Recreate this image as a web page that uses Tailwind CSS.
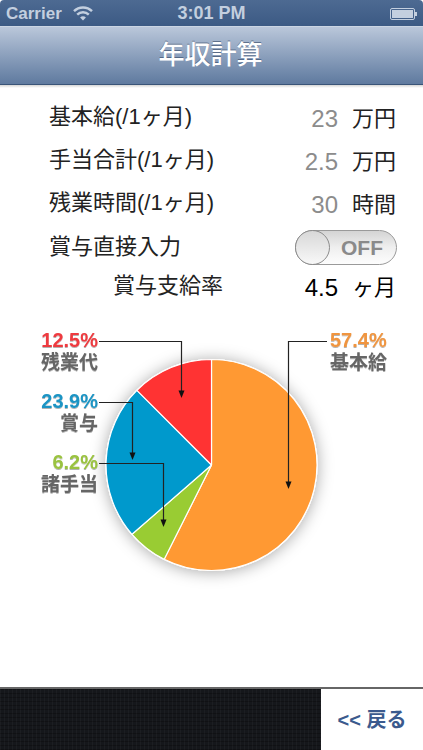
<!DOCTYPE html>
<html lang="ja">
  <head>
    <meta charset="UTF-8" />
    <meta name="viewport" content="width=device-width, initial-scale=1.0" />
    <title>年収計算</title>
    <script src="https://cdn.jsdelivr.net/npm/@tailwindcss/browser@4"></script>
  </head>

  <body class="bg-white w-[423px] h-[750px] overflow-hidden flex flex-col font-['Liberation_Sans','Noto_Sans_CJK_JP',sans-serif]">
    <!-- Status bar -->
    <div class="h-[26px] shrink-0 flex items-center relative px-[6px] pt-[1px] rounded-t-[4px] bg-gradient-to-b from-[#4d6a92] to-[#3c5a84] text-[#c3cfdf] font-bold text-[17px]">
      <span>Carrier</span>
      <svg class="ml-[11px]" width="20" height="15" viewBox="0 0 20 15" fill="none" stroke="#c3cfdf" stroke-width="2.4">
        <path d="M1 5.2a12.8 12.8 0 0 1 18 0" />
        <path d="M4.200 8.600a8.200 8.200 0 0 1 11.600 0" />
        <path d="M10 14.600l-2.900-3a4 4 0 0 1 5.800 0z" fill="#c3cfdf" stroke="none" />
      </svg>
      <span class="absolute left-0 right-0 top-[3px] text-center text-[18px] leading-[20px]">3:01 PM</span>
      <div class="ml-auto flex items-center">
        <div class="w-[25px] h-[12px] border border-[#c3cfdf] rounded-[2px] p-[1px]">
          <div class="w-full h-full bg-[#c3cfdf]"></div>
        </div>
        <div class="w-[2px] h-[4px] bg-[#c3cfdf]"></div>
      </div>
    </div>

    <!-- Nav bar -->
    <div class="h-[59px] shrink-0 flex items-center justify-center pr-[2px] border-t border-t-[#cbd5e3] border-b border-b-[#3a5478] bg-gradient-to-b from-[#bac7da] to-[#5f7a9f] text-white text-[26px] font-medium [text-shadow:0_-1px_0_rgba(50,70,100,0.6)]">
      年収計算
    </div>
    <div class="h-[3px] shrink-0 bg-gradient-to-b from-[#d5d5d5] to-white"></div>

    <!-- Form -->
    <div class="flex flex-col pl-[49px] pr-[27px] pt-[9px] text-[22px] text-[#222]">
      <div class="h-[43px] flex items-center">
        <span class="flex-1 pb-[4px]">基本給(/1ヶ月)</span>
        <span class="text-[#8c8c8c] text-[24px]">23</span>
        <span class="w-[58px] text-right">万円</span>
      </div>
      <div class="h-[43px] flex items-center">
        <span class="flex-1 pb-[4px]">手当合計(/1ヶ月)</span>
        <span class="text-[#8c8c8c] text-[24px]">2.5</span>
        <span class="w-[58px] text-right">万円</span>
      </div>
      <div class="h-[43px] flex items-center">
        <span class="flex-1 pb-[4px]">残業時間(/1ヶ月)</span>
        <span class="text-[#8c8c8c] text-[24px]">30</span>
        <span class="w-[58px] text-right">時間</span>
      </div>
      <div class="h-[43px] flex items-center">
        <span class="flex-1 pb-[2px]">賞与直接入力</span>
        <div class="w-[102px] h-[35px] mr-[-1px] rounded-full border border-[#9a9a9a] bg-gradient-to-b from-[#d4d4d4] via-[#efefef] to-[#fdfdfd] flex items-center relative">
          <span class="absolute right-[13px] text-[#8a8a8a] font-bold text-[21px] leading-none">OFF</span>
          <div class="w-[35px] h-[35px] ml-[-1px] rounded-full border border-[#8c8c8c] bg-gradient-to-b from-[#d8d8d8] to-[#f8f8f8]"></div>
        </div>
      </div>
      <div class="h-[37px] flex items-center pl-[64px]">
        <span class="flex-1 pb-[4px]">賞与支給率</span>
        <span class="text-black text-[24px]">4.5</span>
        <span class="w-[58px] text-right text-black">ヶ月</span>
      </div>
    </div>

    <!-- Chart -->
    <svg class="shrink-0 mt-[14px]" width="423" height="290" viewBox="0 0 423 290">
      <defs>
        <filter id="pieShadow" x="-25%" y="-25%" width="150%" height="150%">
          <feDropShadow dx="0" dy="1" stdDeviation="8" flood-color="#000" flood-opacity="0.35" />
        </filter>
        <filter id="labelShadow" x="-10%" y="-20%" width="120%" height="140%">
          <feDropShadow dx="0" dy="1" stdDeviation="0.7" flood-color="#000" flood-opacity="0.3" />
        </filter>
      </defs>

      <g transform="translate(0.5 0)">
        <circle cx="211" cy="145" r="106" fill="#fff" filter="url(#pieShadow)" />
        <g stroke="#fff" stroke-width="1.2" stroke-linejoin="round">
          <path d="M211 145V39.5A105.500 105.500 0 1 1 163.700 239.300Z" fill="#ff9933" />
          <path d="M211 145L163.700 239.300A105.500 105.500 0 0 1 131.500 214.300Z" fill="#99cc33" />
          <path d="M211 145L131.500 214.300A105.500 105.500 0 0 1 136.400 70.400Z" fill="#0099cc" />
          <path d="M211 145L136.400 70.400A105.500 105.500 0 0 1 211 39.500Z" fill="#ff3333" />
        </g>
      </g>

      <!-- Leader lines -->
      <g fill="none" stroke="#222" stroke-width="1.200">
        <path d="M99 21.500H181.500V73" />
        <path d="M99 82.500H132.500V135" />
        <path d="M99 143.500H163.500V202" />
        <path d="M327 21.500H288.500V164" />
      </g>
      <g fill="#111">
        <path d="M181.500 78l-3-7.500h6z" />
        <path d="M132.500 140l-3-7.500h6z" />
        <path d="M163.500 207l-3-7.500h6z" />
        <path d="M288.500 169l-3-7.500h6z" />
      </g>

      <!-- Labels -->
      <g class="font-bold text-[19px]" filter="url(#labelShadow)">
        <g text-anchor="end">
          <text class="text-[20px]" x="98" y="27" fill="#ee3a3f">12.5%</text>
          <text x="98" y="49" fill="#666">残業代</text>
          <text class="text-[20px]" x="98" y="88" fill="#1a94c4">23.9%</text>
          <text x="98" y="110" fill="#666">賞与</text>
          <text class="text-[20px]" x="98" y="149" fill="#9ac33f">6.2%</text>
          <text x="98" y="171" fill="#666">諸手当</text>
        </g>
        <text class="text-[20px]" x="330" y="27" fill="#f0953f">57.4%</text>
        <text x="330" y="49" fill="#666">基本給</text>
      </g>
    </svg>

    <!-- Footer -->
    <div class="mt-auto h-[63px] shrink-0 flex border-t-2 border-t-[#666] bg-[#15171b] bg-[repeating-linear-gradient(90deg,rgba(255,255,255,0.03)_0,rgba(255,255,255,0.03)_1px,transparent_1px,transparent_4px),repeating-linear-gradient(0deg,rgba(0,0,0,0.25)_0,rgba(0,0,0,0.25)_1px,transparent_1px,transparent_4px)]">
      <button class="ml-auto w-[102px] h-full bg-white text-[#3b5a8d] font-bold text-[20px]">&lt;&lt; 戻る</button>
    </div>
  </body>
</html>
